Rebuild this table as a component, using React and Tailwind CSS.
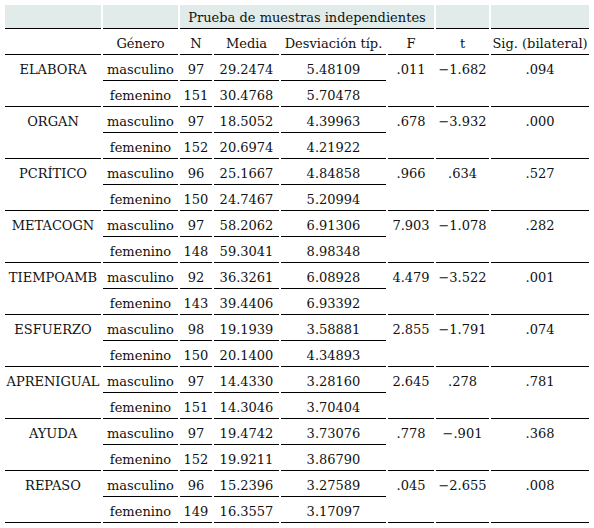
import React from 'react';

// Rows of the independent samples test table
const rows = [
    { name: 'ELABORA', m: ['97', '29.2474', '5.48109'], f: ['151', '30.4768', '5.70478'], F: '.011', t: '−1.682', sig: '.094' },
    { name: 'ORGAN', m: ['97', '18.5052', '4.39963'], f: ['152', '20.6974', '4.21922'], F: '.678', t: '−3.932', sig: '.000' },
    { name: 'PCRÍTICO', m: ['96', '25.1667', '4.84858'], f: ['150', '24.7467', '5.20994'], F: '.966', t: '.634', sig: '.527' },
    { name: 'METACOGN', m: ['97', '58.2062', '6.91306'], f: ['148', '59.3041', '8.98348'], F: '7.903', t: '−1.078', sig: '.282' },
    { name: 'TIEMPOAMB', m: ['92', '36.3261', '6.08928'], f: ['143', '39.4406', '6.93392'], F: '4.479', t: '−3.522', sig: '.001' },
    { name: 'ESFUERZO', m: ['98', '19.1939', '3.58881'], f: ['150', '20.1400', '4.34893'], F: '2.855', t: '−1.791', sig: '.074' },
    { name: 'APRENIGUAL', m: ['97', '14.4330', '3.28160'], f: ['151', '14.3046', '3.70404'], F: '2.645', t: '.278', sig: '.781' },
    { name: 'AYUDA', m: ['97', '19.4742', '3.73076'], f: ['152', '19.9211', '3.86790'], F: '.778', t: '−.901', sig: '.368' },
    { name: 'REPASO', m: ['96', '15.2396', '3.27589'], f: ['149', '16.3557', '3.17097'], F: '.045', t: '−2.655', sig: '.008' },
];

const cell = 'h-[24px] p-0 pt-[2px] text-center align-middle whitespace-nowrap border-b border-black';
const head = 'h-[24px] p-0 pt-[2px] text-center align-middle whitespace-nowrap border-b border-black bg-[#e0ebea] font-normal';
const span = 'h-[50px] p-0 pt-[5px] text-center align-top whitespace-nowrap border-b border-black';

const App = () => {
    return (
        <div className="min-h-screen bg-white pt-[3px] pl-[3px]">
            <table
                className="table-fixed border-separate border-spacing-[2px] text-[13px] leading-[16px] text-[#111]"
                style={{ fontFamily: '"DejaVu Serif", serif', width: 588 }}
            >
                <colgroup>
                    <col className="w-[96px]" />
                    <col className="w-[75px]" />
                    <col className="w-[32px]" />
                    <col className="w-[65px]" />
                    <col className="w-[105px]" />
                    <col className="w-[46px]" />
                    <col className="w-[53px]" />
                    <col className="w-[98px]" />
                </colgroup>
                <thead>
                    <tr>
                        <th className={head}></th>
                        <th className={head}></th>
                        <th className={head} colSpan={4}>Prueba de muestras independientes</th>
                        <th className={head}></th>
                        <th className={head}></th>
                    </tr>
                    <tr>
                        <th className={`${cell} font-normal`}></th>
                        <th className={`${cell} font-normal`}>Género</th>
                        <th className={`${cell} font-normal`}>N</th>
                        <th className={`${cell} font-normal`}>Media</th>
                        <th className={`${cell} font-normal`}>Desviación típ.</th>
                        <th className={`${cell} font-normal`}>F</th>
                        <th className={`${cell} font-normal`}>t</th>
                        <th className={`${cell} font-normal`}>Sig. (bilateral)</th>
                    </tr>
                </thead>
                <tbody>
                    {rows.map((r) => (
                        <React.Fragment key={r.name}>
                            <tr>
                                <td className={span} rowSpan={2}>{r.name}</td>
                                <td className={cell}>masculino</td>
                                {r.m.map((v, i) => (
                                    <td key={i} className={cell}>{v}</td>
                                ))}
                                <td className={span} rowSpan={2}>{r.F}</td>
                                <td className={span} rowSpan={2}>{r.t}</td>
                                <td className={span} rowSpan={2}>{r.sig}</td>
                            </tr>
                            <tr>
                                <td className={cell}>femenino</td>
                                {r.f.map((v, i) => (
                                    <td key={i} className={cell}>{v}</td>
                                ))}
                            </tr>
                        </React.Fragment>
                    ))}
                </tbody>
            </table>
        </div>
    );
};

export default App;
